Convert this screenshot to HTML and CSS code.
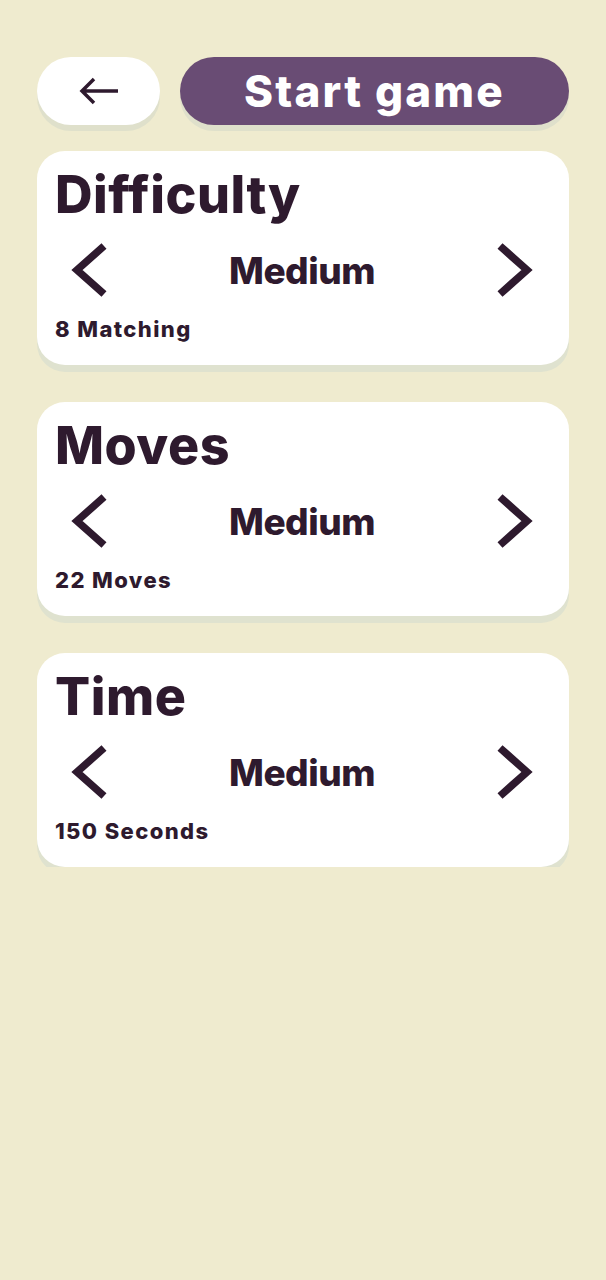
FILE: index.html
```html
<!DOCTYPE html>
<html lang="en">
<head>
  <meta charset="UTF-8" />
  <meta name="viewport" content="width=device-width, initial-scale=1.0" />
  <title>Game settings</title>
  <link rel="stylesheet" href="styles.css">
</head>
<body>
  <div class="page">
    <div class="topbar">
      <button class="back" aria-label="Back">
        <svg width="42" height="30" viewBox="0 0 42 30">
          <path d="M40 15H4M16 3L4 15l12 12" fill="none" stroke="#2e1a2e" stroke-width="3.5" stroke-linecap="butt" stroke-linejoin="miter"/>
        </svg>
      </button>
      <button class="start">Start game</button>
    </div>

    <div class="card">
      <h2>Difficulty</h2>
      <div class="picker">
        <button class="arrow"><svg width="40" height="54" viewBox="0 0 40 54"><path d="M35 3L8 27l27 24" fill="none" stroke="#2e1a2e" stroke-width="7.5"/></svg></button>
        <span class="value">Medium</span>
        <button class="arrow"><svg width="40" height="54" viewBox="0 0 40 54"><path d="M5 3l27 24L5 51" fill="none" stroke="#2e1a2e" stroke-width="7.5"/></svg></button>
      </div>
      <p class="note">8 Matching</p>
    </div>

    <div class="card">
      <h2>Moves</h2>
      <div class="picker">
        <button class="arrow"><svg width="40" height="54" viewBox="0 0 40 54"><path d="M35 3L8 27l27 24" fill="none" stroke="#2e1a2e" stroke-width="7.5"/></svg></button>
        <span class="value">Medium</span>
        <button class="arrow"><svg width="40" height="54" viewBox="0 0 40 54"><path d="M5 3l27 24L5 51" fill="none" stroke="#2e1a2e" stroke-width="7.5"/></svg></button>
      </div>
      <p class="note">22 Moves</p>
    </div>

    <div class="card">
      <h2>Time</h2>
      <div class="picker">
        <button class="arrow"><svg width="40" height="54" viewBox="0 0 40 54"><path d="M35 3L8 27l27 24" fill="none" stroke="#2e1a2e" stroke-width="7.5"/></svg></button>
        <span class="value">Medium</span>
        <button class="arrow"><svg width="40" height="54" viewBox="0 0 40 54"><path d="M5 3l27 24L5 51" fill="none" stroke="#2e1a2e" stroke-width="7.5"/></svg></button>
      </div>
      <p class="note">150 Seconds</p>
    </div>
  </div>
</body>
</html>
```

FILE: styles.css
```css
*, *::before, *::after { box-sizing: border-box; }
body {
  margin: 0;
  background-color: #efebcf;
  font-family: Inter, Lato, sans-serif;
  color: #2e1a2e;
}
.page {
  padding: 57px 37px 0;
}
.topbar {
  display: flex;
  gap: 20px;
  height: 68px;
}
.topbar button {
  border: none;
  border-radius: 34px;
  height: 68px;
  cursor: pointer;
  box-shadow: 0 6px 0 #dfe0cb;
}
.back {
  width: 123px;
  background-color: #fff;
  display: flex;
  align-items: center;
  justify-content: center;
}
.start {
  flex: 1;
  background-color: #694c74;
  color: #fff;
  font-family: Inter, sans-serif;
  font-weight: 800;
  font-size: 44px;
  letter-spacing: 2.2px;
  padding: 0;
}
.card {
  background-color: #fff;
  border-radius: 28px;
  height: 214px;
  margin-top: 26px;
  padding: 16px 18px 0;
  box-shadow: 0 7px 0 #dfe2cf;
}
.card + .card {
  margin-top: 37px;
}
.card h2 {
  margin: 0;
  font-size: 52px;
  font-weight: 800;
  line-height: 56px;
  letter-spacing: 0.5px;
}
.picker {
  display: flex;
  align-items: center;
  justify-content: space-between;
  padding: 0 16px 0 14px;
  margin-top: 20px;
  height: 54px;
}
.arrow {
  background: none;
  border: none;
  padding: 0;
  width: 40px;
  height: 54px;
  cursor: pointer;
}
.value {
  font-size: 37px;
  font-weight: 800;
  letter-spacing: -0.5px;
}
.note {
  margin: 19px 0 0;
  font-size: 22px;
  font-weight: 800;
  letter-spacing: 1.4px;
}
```
